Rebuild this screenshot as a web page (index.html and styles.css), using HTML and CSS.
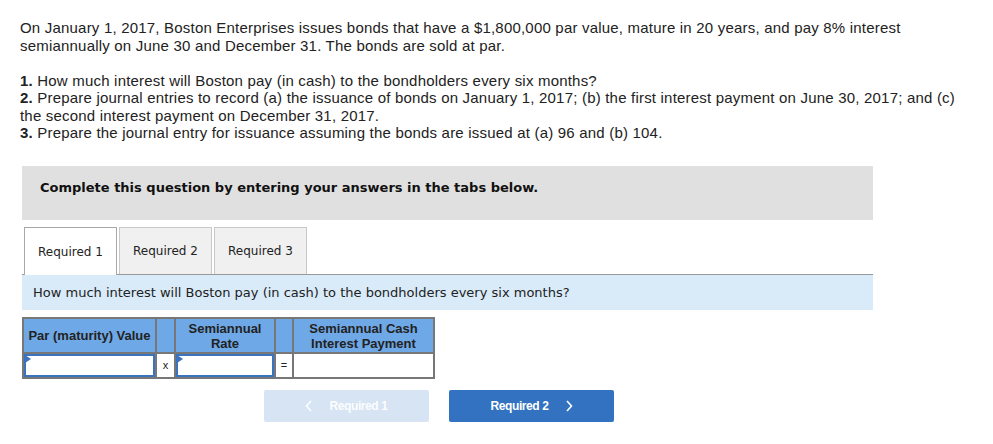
FILE: index.html
```html
<!DOCTYPE html>
<html>
<head>
<meta charset="utf-8">
<link rel="stylesheet" href="styles.css">
</head>
<body>
<div class="page">
  <div class="intro">
    <p class="lead">On January 1, 2017, Boston Enterprises issues bonds that have a $1,800,000 par value, mature in 20 years, and pay 8% interest<br>semiannually on June 30 and December 31. The bonds are sold at par.</p>
    <p><b>1.</b> How much interest will Boston pay (in cash) to the bondholders every six months?<br>
    <b>2.</b> Prepare journal entries to record (a) the issuance of bonds on January 1, 2017; (b) the first interest payment on June 30, 2017; and (c)<br>the second interest payment on December 31, 2017.<br>
    <b>3.</b> Prepare the journal entry for issuance assuming the bonds are issued at (a) 96 and (b) 104.</p>
  </div>
  <div class="notice">Complete this question by entering your answers in the tabs below.</div>
  <div class="tabs">
    <div class="tab active">Required 1</div>
    <div class="tab">Required 2</div>
    <div class="tab">Required 3</div>
  </div>
  <div class="question">How much interest will Boston pay (in cash) to the bondholders every six months?</div>
  <table class="calc">
    <tr class="head">
      <th class="c1">Par (maturity) Value</th>
      <th class="c2"></th>
      <th class="c3">Semiannual<br>Rate</th>
      <th class="c4"></th>
      <th class="c5">Semiannual Cash<br>Interest Payment</th>
    </tr>
    <tr class="row">
      <td class="input"><div class="box"><span class="flag"></span></div></td>
      <td class="op">x</td>
      <td class="input"><div class="box"><span class="flag"></span></div></td>
      <td class="op">=</td>
      <td class="out"></td>
    </tr>
  </table>
  <div class="nav">
    <div class="btn prev"><svg class="chev" width="8" height="12" viewBox="0 0 8 12"><path d="M6 1 L1.5 6 L6 11" fill="none" stroke="currentColor" stroke-width="1.6"/></svg><span>Required 1</span></div>
    <div class="btn next"><span>Required 2</span><svg class="chev" width="8" height="12" viewBox="0 0 8 12"><path d="M2 1 L6.5 6 L2 11" fill="none" stroke="currentColor" stroke-width="1.6"/></svg></div>
  </div>
</div>
</body>
</html>
```

FILE: styles.css
```css
* { box-sizing: border-box; }
body { margin: 0; background: #fff; }
.page { padding: 19px 0 0 0; width: 993px; }
.intro { padding-left: 20px; width: 980px; font-family: "Liberation Sans", Arial, sans-serif; font-size: 15px; letter-spacing: 0.2px; line-height: 17.5px; color: #222; white-space: nowrap; }
.intro p { margin: 0; }
.intro p.lead { margin-bottom: 17.5px; }
.intro b { font-weight: 700; }
.notice { margin: 24.5px 0 0 22px; width: 851px; height: 54px; background: #e0e0e0; padding: 14px 0 0 18px; font-family: "DejaVu Sans", Verdana, sans-serif; font-weight: bold; font-size: 13px; color: #111; }
.tabs { display: flex; gap: 2px; margin: 7px 0 0 22px; width: 851px; border-bottom: 1px solid #999; padding-left: 2px; height: 48px; }
.tab { width: 93px; height: 47px; border: 1px solid #c8c8c8; border-bottom: none; background: #f0f0f0; font-family: "DejaVu Sans", Verdana, sans-serif; font-size: 12px; color: #222; display: flex; align-items: center; justify-content: center; }
.tab.active { background: #fff; border-color: #a8a8a8; height: 48px; margin-bottom: -1px; }
.question { margin-left: 22px; width: 851px; height: 35px; background: #d9ebf9; padding: 10px 0 0 11px; font-family: "DejaVu Sans", Verdana, sans-serif; font-size: 13px; color: #222; }
.calc { margin: 7px 0 0 22px; border-collapse: collapse; font-family: "Liberation Sans", Arial, sans-serif; }
.calc th { background: #6fa8e6; border: 2px solid #777; font-weight: bold; font-size: 13px; color: #222; height: 35px; padding: 0; line-height: 15px; }
.calc .c1 { width: 133px; }
.calc .c2 { width: 19px; }
.calc .c3 { width: 100px; }
.calc .c4 { width: 18px; }
.calc .c5 { width: 141px; }
.calc td { border: 2px solid #777; height: 25px; padding: 0; background: #fff; }
.calc td.op { text-align: center; font-size: 11px; color: #222; padding-bottom: 2px; }
.calc td.input { padding: 0; }
.box { position: relative; height: 23px; border: 2px solid #3b73bf; background: #fff; }
.flag { position: absolute; left: -1px; top: -1px; width: 0; height: 0; border-top: 4px solid transparent; border-bottom: 4px solid transparent; border-left: 6px solid #3b73bf; }
.nav { display: flex; gap: 20px; margin: 11px 0 0 264px; }
.btn { width: 165px; height: 32px; border-radius: 2px; display: flex; align-items: center; justify-content: center; gap: 16px; font-family: "Liberation Sans", Arial, sans-serif; font-weight: bold; font-size: 12px; letter-spacing: -0.4px; color: #fff; }
.btn.prev { background: #d6e4f3; color: rgba(255,255,255,0.95); }
.btn.next { background: #3272c0; }
.chev { display: block; }
```
